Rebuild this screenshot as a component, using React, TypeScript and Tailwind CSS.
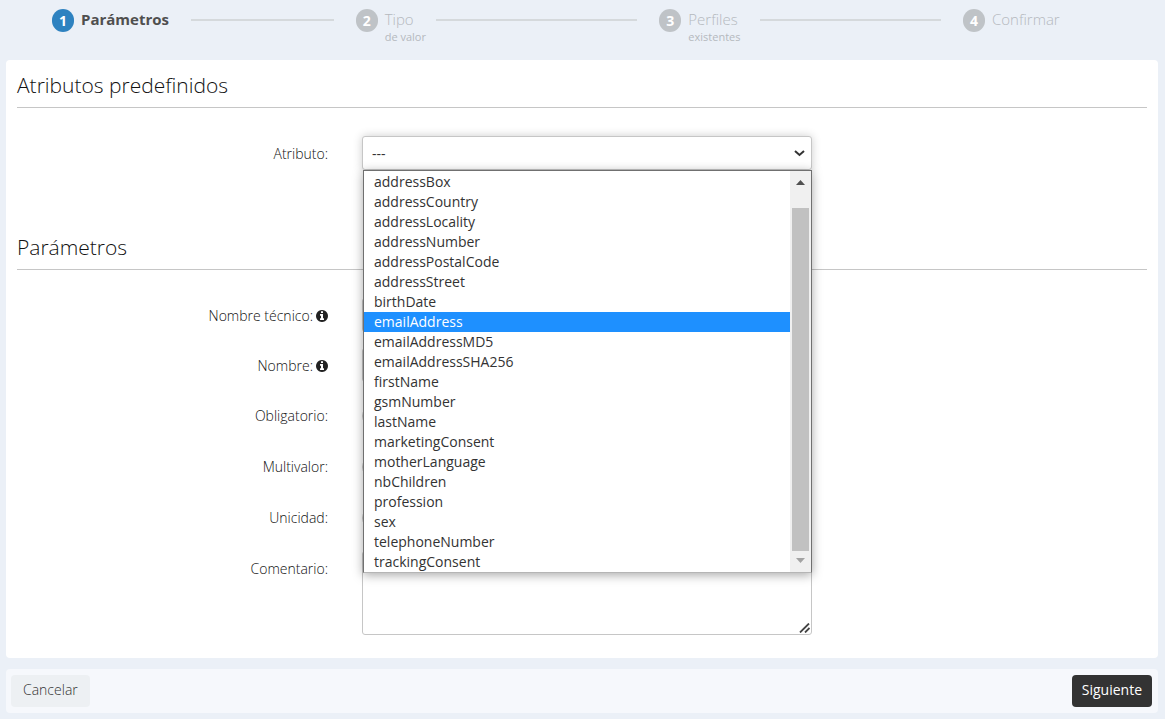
import { useState } from 'react'
import { clsx } from 'clsx'

const STEPS = [
  { title: 'Parámetros', subtitle: '' },
  { title: 'Tipo', subtitle: 'de valor' },
  { title: 'Perfiles', subtitle: 'existentes' },
  { title: 'Confirmar', subtitle: '' },
]

const ATTRIBUTES = [
  'addressBox',
  'addressCountry',
  'addressLocality',
  'addressNumber',
  'addressPostalCode',
  'addressStreet',
  'birthDate',
  'emailAddress',
  'emailAddressMD5',
  'emailAddressSHA256',
  'firstName',
  'gsmNumber',
  'lastName',
  'marketingConsent',
  'motherLanguage',
  'nbChildren',
  'profession',
  'sex',
  'telephoneNumber',
  'trackingConsent',
]

const FIELD = 'block w-full rounded-[3px] border border-[#c6c6c6] bg-white px-[9px] outline-none'

function Steps() {
  return (
    <ol className="grid h-[60px] grid-cols-[1fr_1fr_1fr_202px] pl-[52px] pt-[9px]">
      {STEPS.map((step, i) => (
        <li key={step.title} className={clsx('flex', i === 0 ? 'text-[#4f4f4f]' : 'text-[#b5b9be]')}>
          <span
            className={clsx(
              'flex h-[23px] w-[22px] shrink-0 items-center justify-center rounded-full text-[14px] font-bold text-white',
              i === 0 ? 'bg-[#2e82c0]' : 'bg-[#bfc3c7]',
            )}
          >
            {i + 1}
          </span>
          <div className="ml-[7px] flex-1">
            <div className="flex h-[22px] items-center">
              <span className={clsx('pb-[2px] text-[15px] leading-[20px]', i === 0 ? 'font-bold' : 'font-light')}>
                {step.title}
              </span>
              {i < STEPS.length - 1 && <span className="mx-[22px] h-[2px] flex-1 bg-[#d5d9dc]" />}
            </div>
            {step.subtitle && <p className="text-[11px] leading-[12px]">{step.subtitle}</p>}
          </div>
        </li>
      ))}
    </ol>
  )
}

function SectionTitle({ children }: { children: string }) {
  return (
    <h2 className="h-[48px] border-b border-[#c6c6c6] pt-[11px] text-[21px] font-light leading-[28px] text-[#111111]">
      {children}
    </h2>
  )
}

function InfoIcon() {
  return (
    <svg className="h-[12px] w-[12px]" viewBox="0 0 1536 1536" fill="#222222" aria-hidden="true">
      <path d="M1024 1248v-160q0-14-9-23t-23-9h-96V544q0-14-9-23t-23-9H544q-14 0-23 9t-9 23v160q0 14 9 23t23 9h96v320h-96q-14 0-23 9t-9 23v160q0 14 9 23t23 9h448q14 0 23-9t9-23zM896 352V192q0-14-9-23t-23-9H672q-14 0-23 9t-9 23v160q0 14 9 23t23 9h192q14 0 23-9t9-23zm640 416q0 209-103 385.500T1153.500 1433 768 1536t-385.500-103T103 1153.500 0 768t103-385.500T382.500 103 768 0t385.500 103T1433 382.500 1536 768z" />
    </svg>
  )
}

type RowProps = { id: string; label: string; info?: boolean; children: React.ReactNode }

function Row({ id, label, info, children }: RowProps) {
  return (
    <div className="grid grid-cols-[311fr_450fr_301fr] gap-x-[34px]">
      <label htmlFor={id} className="flex h-[34px] items-center justify-end gap-[3px] pt-px font-light text-[#111111]">
        {label}
        {info && <InfoIcon />}
      </label>
      <div className="relative">{children}</div>
    </div>
  )
}

function AttributeList({ active, onPick }: { active: string; onPick: (name: string) => void }) {
  return (
    <div className="absolute left-px right-0 top-[34px] z-10 flex border border-[#707070] border-b-[#b5b5b5] bg-white shadow-[0_2px_10px_rgba(0,0,0,0.35)]">
      <ul role="listbox" aria-label="Atributo" className="flex-1 pt-px">
        {ATTRIBUTES.map((name) => (
          <li
            key={name}
            role="option"
            aria-selected={name === active}
            onClick={() => onPick(name)}
            className={clsx('h-[20px] px-[10px] leading-[20px]', name === active && 'bg-[#1e90ff] text-white')}
          >
            {name}
          </li>
        ))}
      </ul>
      <div className="flex w-[21px] flex-col items-center bg-[#f0f0f0]">
        <svg className="my-[9px] h-[5px] w-[9px] shrink-0" viewBox="0 0 9 5">
          <path d="M0 5 4.5 0 9 5z" fill="#505050" />
        </svg>
        <div className="mt-[14px] w-[17px] flex-1 bg-[#c1c1c1]" />
        <svg className="mb-[9px] mt-[7px] h-[5px] w-[9px] shrink-0" viewBox="0 0 9 5">
          <path d="M0 0h9L4.5 5z" fill="#a3a3a3" />
        </svg>
      </div>
    </div>
  )
}

function Toggle({ id }: { id: string }) {
  return (
    <input
      id={id}
      type="checkbox"
      className="mb-[7px] mt-[8px] block h-[20px] w-[40px] appearance-none rounded-full border border-[#c6c6c6]"
    />
  )
}

export default function App() {
  const [active, setActive] = useState('emailAddress')

  return (
    <div className="min-h-screen bg-[#ebf0f7] font-['Open_Sans',sans-serif] text-[14px] text-[#333333]">
      <Steps />
      <main className="ml-[6px] mr-[7px]">
        <form className="rounded-[4px] bg-white px-[11px] pb-[23px]">
          <SectionTitle>Atributos predefinidos</SectionTitle>
          <div className="pb-[52px] pt-[28px]">
            <Row id="atributo" label="Atributo:">
              <select
                id="atributo"
                className={clsx(FIELD, 'h-[34px] appearance-none shadow-[0_0_10px_rgba(0,0,0,0.2)]')}
              >
                <option>---</option>
              </select>
              <svg className="pointer-events-none absolute right-[7px] top-[13px] h-[8px] w-[11px]" viewBox="0 0 11 8">
                <path d="m1 2 4.500 4L10 2" fill="none" stroke="#333" strokeWidth="2" />
              </svg>
              <AttributeList active={active} onPick={setActive} />
            </Row>
          </div>
          <SectionTitle>Parámetros</SectionTitle>
          <div className="flex flex-col gap-[16px] pt-[28px]">
            <Row id="tecnico" label="Nombre técnico:" info>
              <input id="tecnico" type="text" className={clsx(FIELD, 'h-[34px]')} />
            </Row>
            <Row id="nombre" label="Nombre:" info>
              <input id="nombre" type="text" className={clsx(FIELD, 'h-[34px]')} />
            </Row>
            <Row id="obligatorio" label="Obligatorio:">
              <Toggle id="obligatorio" />
            </Row>
            <Row id="multivalor" label="Multivalor:">
              <Toggle id="multivalor" />
            </Row>
            <Row id="unicidad" label="Unicidad:">
              <Toggle id="unicidad" />
            </Row>
            <Row id="comentario" label="Comentario:">
              <textarea id="comentario" className={clsx(FIELD, 'h-[84px] resize-none')} />
              <svg
                className="pointer-events-none absolute bottom-[2px] right-[2px] h-[10px] w-[11px]"
                viewBox="0 0 11 10"
                stroke="#444"
                strokeWidth="1.800"
              >
                <path d="M1 9.500 10 .5M6 9.500l4.500-4.500" />
              </svg>
            </Row>
          </div>
        </form>
        <footer className="mt-[11px] flex justify-between rounded-[4px] bg-[#f6f8fc] py-[6px] pl-[5px] pr-[6px]">
          <button type="button" className="h-[32px] rounded-[4px] bg-[#edf0f3] px-[12px] pb-[3px] font-light text-[#333333]">
            Cancelar
          </button>
          <button type="button" className="h-[32px] rounded-[4px] bg-[#333333] px-[10px] pb-[3px] text-white">
            Siguiente
          </button>
        </footer>
      </main>
    </div>
  )
}
